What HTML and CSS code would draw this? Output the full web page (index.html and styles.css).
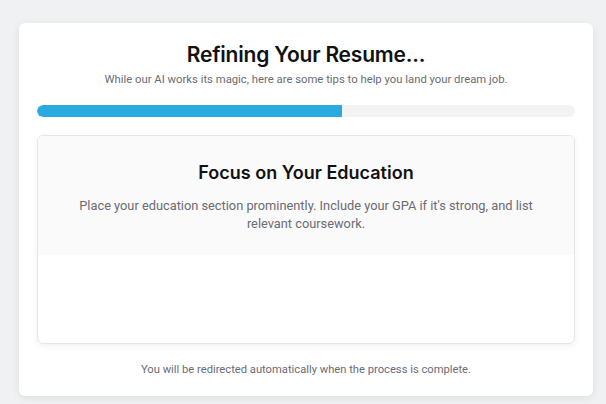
FILE: index.html
```html
<!DOCTYPE html>
<html>
<head>
<meta charset="utf-8">
<link rel="stylesheet" href="styles.css">
</head>
<body>
<div class="card">
  <h1 class="title">Refining Your Resume...</h1>
  <p class="subtitle">While our AI works its magic, here are some tips to help you land your dream job.</p>
  <div class="progress"><div class="progress-fill" style="width:56.7%"></div></div>
  <div class="tip">
    <div class="tip-top">
      <h2 class="tip-title">Focus on Your Education</h2>
      <p class="tip-text">Place your education section prominently. Include your GPA if it's strong, and list relevant coursework.</p>
    </div>
    <div class="tip-bottom"></div>
  </div>
  <p class="footer">You will be redirected automatically when the <span class="link">process</span> is complete.</p>
</div>
</body>
</html>
```
FILE: styles.css
```css
html, body { margin: 0; padding: 0; }
body {
  background: #f0f1f3;
  font-family: Roboto, "Liberation Sans", sans-serif;
  height: 404px;
  overflow: hidden;
}
.card {
  margin: 23px 0 0 19px;
  width: 574px;
  height: 373px;
  box-sizing: border-box;
  background: #fff;
  border-radius: 6px;
  box-shadow: 0 2px 8px rgba(0,0,0,0.08);
  padding: 17px 18px 0 18px;
  display: flex;
  flex-direction: column;
  align-items: stretch;
}
.title {
  margin: 0;
  text-align: center;
  font-family: Inter, "Liberation Sans", sans-serif;
  font-size: 21px;
  font-weight: 600;
  color: #111;
  line-height: 30px;
  letter-spacing: -0.2px;
}
.subtitle {
  margin: 2px 0 0 0;
  text-align: center;
  font-size: 11.3px;
  line-height: 16px;
  color: #6b6b73;
}
.progress {
  margin-top: 17px;
  height: 12px;
  border-radius: 6px;
  background: #f3f3f4;
  overflow: hidden;
}
.progress-fill {
  height: 100%;
  background: #29abdf;
  border-radius: 6px 0 0 6px;
}
.tip {
  margin-top: 18px;
  height: 209px;
  border: 1px solid #e6e6e8;
  border-radius: 6px;
  box-sizing: border-box;
  background: #fff;
  box-shadow: 0 2px 6px rgba(0,0,0,0.06);
  display: flex;
  flex-direction: column;
  overflow: hidden;
}
.tip-top {
  background: #fafafa;
  height: 119px;
  padding: 25px 30px 0 30px;
  box-sizing: border-box;
  text-align: center;
}
.tip-title {
  margin: 0;
  font-family: Inter, "Liberation Sans", sans-serif;
  font-size: 18px;
  font-weight: 600;
  line-height: 24px;
  color: #111;
}
.tip-text {
  margin: 12px 0 0 0;
  font-size: 12.8px;
  line-height: 18px;
  color: #6b6b73;
}
.tip-bottom { flex: 1; }
.footer {
  margin: 18px 0 0 0;
  text-align: center;
  font-size: 11.2px;
  line-height: 16px;
  color: #6b6b73;
}
.link { color: #5a6c8a; }
```
